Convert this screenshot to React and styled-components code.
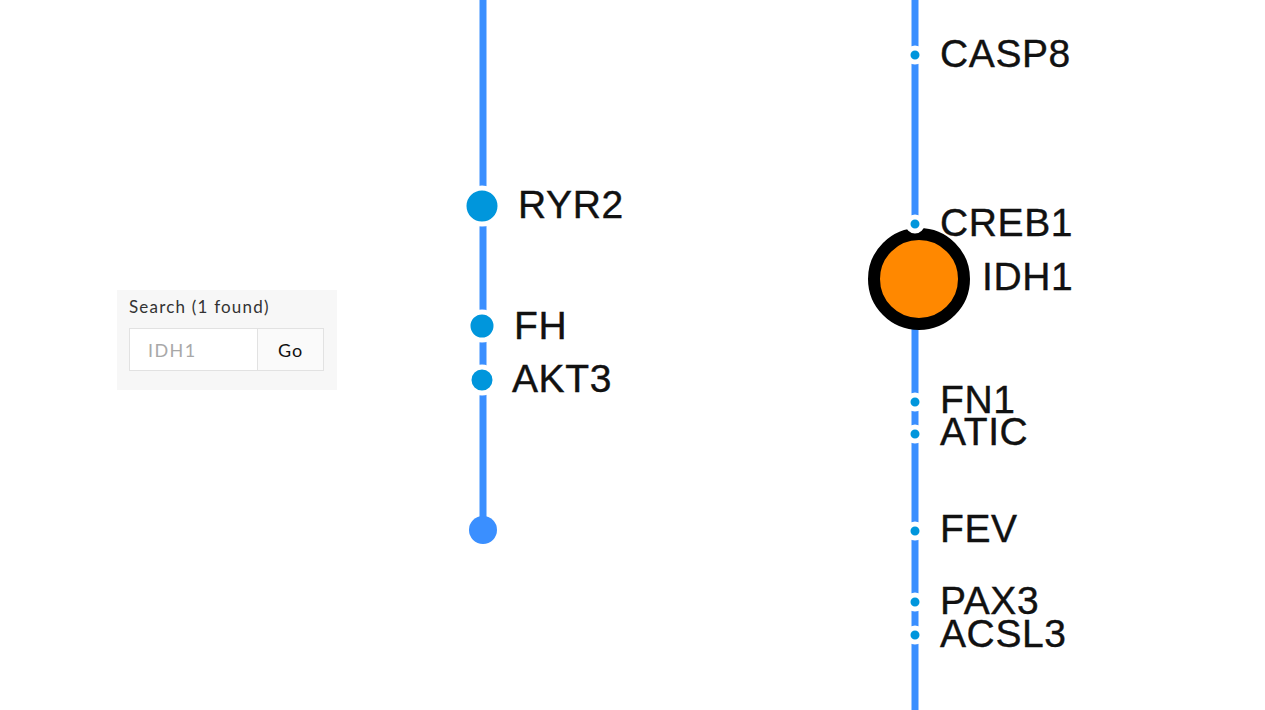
import React from 'react';
import styled, { createGlobalStyle } from 'styled-components';

const GlobalStyle = createGlobalStyle`
  html, body {
    margin: 0;
    padding: 0;
    background: #fff;
  }
`;

const Page = styled.div`
  position: relative;
  width: 1265px;
  height: 710px;
  overflow: hidden;
  background: #fff;
`;

const Canvas = styled.svg`
  display: block;
  width: 1265px;
  height: 710px;
`;

const Label = styled.text`
  font-family: 'Liberation Sans', Arial, sans-serif;
  font-size: 39px;
  letter-spacing: 0.6px;
  fill: #111;
  stroke: #111;
  stroke-width: 0.4px;
`;

const SearchPanel = styled.div`
  position: absolute;
  left: 117px;
  top: 290px;
  width: 220px;
  height: 100px;
  box-sizing: border-box;
  padding: 6px 12px 0 12px;
  background: #f7f7f7;
  font-family: Lato, 'Open Sans', sans-serif;
`;

const SearchTitle = styled.div`
  font-size: 17px;
  font-weight: 400;
  letter-spacing: 1.2px;
  color: #333;
  line-height: 22px;
`;

const SearchRow = styled.div`
  display: flex;
  margin-top: 10px;
  height: 43px;
`;

const SearchInput = styled.input`
  width: 129px;
  box-sizing: border-box;
  border: 1px solid #e2e2e2;
  background: #fff;
  padding: 0 0 0 18px;
  font-family: inherit;
  font-size: 18px;
  font-weight: 400;
  letter-spacing: 1.4px;
  color: #333;
  outline: none;

  &::placeholder {
    color: #a8a8a8;
  }
`;

const GoButton = styled.button`
  width: 66px;
  box-sizing: border-box;
  border: 1px solid #e2e2e2;
  border-left: none;
  background: #fafafa;
  font-family: inherit;
  font-size: 18px;
  letter-spacing: 1px;
  color: #111;
  cursor: pointer;
`;

const LINE = '#3a8fff';
const DOT = '#0096dc';

const leftNodes = [
  { name: 'RYR2', y: 206, r: 18, tx: 518, ty: 218 },
  { name: 'FH', y: 326, r: 14, tx: 514, ty: 339 },
  { name: 'AKT3', y: 380, r: 13, tx: 512, ty: 392 },
];

const rightNodes = [
  { name: 'CASP8', y: 55, ty: 67 },
  { name: 'CREB1', y: 224, ty: 236 },
  { name: 'FN1', y: 402, ty: 413 },
  { name: 'ATIC', y: 434, ty: 445 },
  { name: 'FEV', y: 531, ty: 542 },
  { name: 'PAX3', y: 602, ty: 614 },
  { name: 'ACSL3', y: 635, ty: 647 },
];

export default function App() {
  return (
    <Page>
      <GlobalStyle />
      <Canvas viewBox="0 0 1265 710">
        {/* left chromosome */}
        <line x1={483} y1={0} x2={483} y2={530} stroke={LINE} strokeWidth={7} />
        <circle cx={483} cy={530} r={14} fill={LINE} />
        {leftNodes.map(n => (
          <g key={n.name}>
            <circle cx={482} cy={n.y} r={n.r} fill={DOT} stroke="#fff" strokeWidth={5} />
            <Label x={n.tx} y={n.ty}>{n.name}</Label>
          </g>
        ))}

        {/* right chromosome */}
        <line x1={915} y1={0} x2={915} y2={710} stroke={LINE} strokeWidth={7} />
        <circle cx={919} cy={279} r={45} fill="#ff8800" stroke="#000" strokeWidth={12} />
        <Label x={982} y={290}>IDH1</Label>
        {rightNodes.map(n => (
          <g key={n.name}>
            <circle cx={915} cy={n.y} r={7} fill={DOT} stroke="#fff" strokeWidth={5} />
            <Label x={940} y={n.ty}>{n.name}</Label>
          </g>
        ))}
      </Canvas>

      <SearchPanel>
        <SearchTitle>Search (1 found)</SearchTitle>
        <SearchRow>
          <SearchInput placeholder="IDH1" />
          <GoButton>Go</GoButton>
        </SearchRow>
      </SearchPanel>
    </Page>
  );
}
